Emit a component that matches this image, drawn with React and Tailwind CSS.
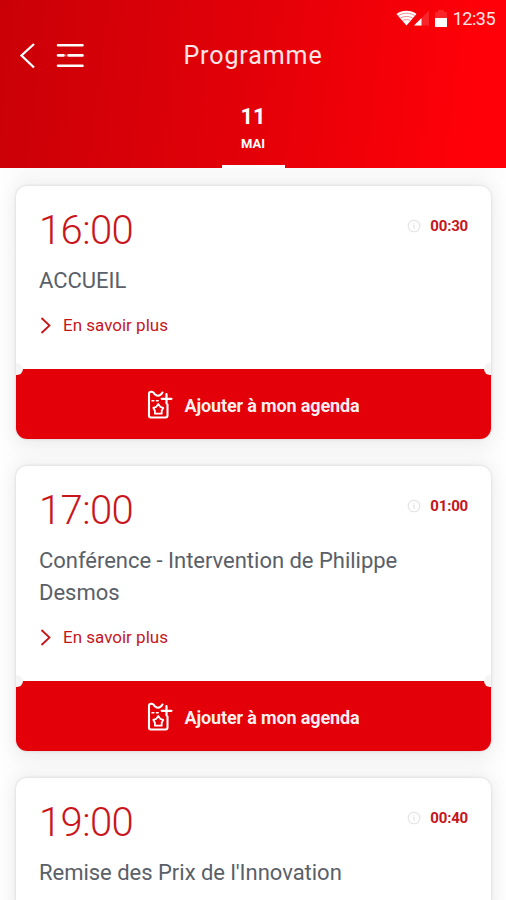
import React from "react";

const sessions = [
  { id: 1, time: "16:00", duration: "00:30", title: "ACCUEIL", expanded: true },
  {
    id: 2,
    time: "17:00",
    duration: "01:00",
    title: "Conférence - Intervention de Philippe Desmos",
    expanded: true,
  },
  {
    id: 3,
    time: "19:00",
    duration: "00:40",
    title: "Remise des Prix de l'Innovation",
    expanded: false,
  },
];

// --- Icons ---
const WifiIcon = () => (
  <svg width="21" height="16" viewBox="0 0 22 16" fill="none">
    <path d="M0.5 3.8C6.5 -0.6 15.5 -0.6 21.5 3.8L11 15.8Z" fill="white" />
    <path
      d="M2.5 5.4C8 2.2 14 2.2 19.5 5.4M4.5 8C9 5.8 13 5.8 17.5 8M7 10.5C9.5 9.4 12.5 9.4 15 10.5"
      stroke="#f50008"
      strokeWidth="0.8"
      opacity="0.6"
    />
  </svg>
);

const SignalIcon = () => (
  <svg width="15" height="16" viewBox="0 0 16 16">
    <path d="M0 16L16 0V16Z" fill="white" opacity="0.14" />
    <path d="M0 16L8 8V16Z" fill="white" />
  </svg>
);

const BatteryIcon = () => (
  <svg width="12" height="17" viewBox="0 0 12 17">
    <path d="M3 0H9V2H12V8H0V2H3Z" fill="white" opacity="0.14" />
    <path d="M0 8H12V17H0Z" fill="white" />
  </svg>
);

const BackIcon = () => (
  <svg width="16" height="26" viewBox="0 0 16 26" fill="none">
    <path d="M15 1L2.5 12.5L15 24.5" stroke="white" strokeWidth="2.3" />
  </svg>
);

const MenuIcon = () => (
  <svg width="28" height="26" viewBox="0 0 28 26" fill="none">
    <path
      d="M2 2.3H26.5M2 12.4H7.5M12.5 12.4H26.5M2 22.8H26.5"
      stroke="white"
      strokeWidth="2.6"
      strokeLinecap="round"
    />
    <path d="M9.3 12.4H10.3" stroke="white" strokeWidth="2.2" opacity="0.6" />
  </svg>
);

const ChevronIcon = () => (
  <svg width="12" height="18" viewBox="0 0 12 18" fill="none">
    <path d="M2.5 2L10.5 9.5L2.5 17" stroke="#c41218" strokeWidth="1.8" />
  </svg>
);

const InfoIcon = () => (
  <svg width="14" height="14" viewBox="0 0 14 14" fill="none">
    <circle cx="7" cy="7" r="5.8" stroke="#e2e2e2" strokeWidth="1.1" />
    <path d="M7 3.8V4.8M7 6V10.2M5.8 6.2H7" stroke="#dedede" />
  </svg>
);

const AgendaIcon = () => (
  <svg
    width="26"
    height="30"
    viewBox="0 0 26 30"
    fill="none"
    stroke="white"
    strokeLinejoin="round"
    strokeLinecap="round"
  >
    <path
      d="M15.5 2.5Q13.5 5.8 11 5.8T6.5 2.5Q5.5 1.8 4 1.8Q2 1.8 2 3.8V25.5Q2 27.5 4 27.5H18.5Q20.5 27.5 20.5 25.5V14.5"
      strokeWidth="2.1"
    />
    <path d="M19.5 4V13.5M14.7 8.8H24.5" strokeWidth="2.2" />
    <path d="M5 10.8H13.5" strokeWidth="1.6" strokeDasharray="1.8 2.6" />
    <path
      d="M11.3 14L13.3 16.8L16.3 17.8L14.7 20.7V23.7H7.9V20.7L6.3 17.8L9.3 16.8Z"
      strokeWidth="1.8"
    />
  </svg>
);

// --- Session card, shaped like a ticket ---
const SessionCard = ({ time, duration, title, expanded }) => {
  return (
    <div className="rounded-[11px] bg-white shadow-[0_0_3px_rgba(0,0,0,0.14),0_2px_20px_rgba(0,0,0,0.08)]">
      <div className="px-[23px] pt-5 pb-[32px]">
        <div className="flex items-start justify-between">
          <div className="text-[40px] leading-[50px] font-light tracking-[-0.6px] text-[#c9161c]">
            {time}
          </div>
          <div className="mt-[10px] flex items-center gap-[9px]">
            <InfoIcon />
            <span className="text-[15px] leading-5 font-bold tracking-[-0.2px] text-[#c5161c]">
              {duration}
            </span>
          </div>
        </div>
        <h2 className="mt-[9px] text-[22px] leading-8 font-normal tracking-[-0.02px] text-[#596068]">
          {title}
        </h2>
        {expanded && (
          <button
            type="button"
            className="mt-4 flex h-6 items-center gap-3 text-[17px] leading-6 text-[#c5161c]"
          >
            <ChevronIcon />
            En savoir plus
          </button>
        )}
      </div>
      {expanded && (
        <div className="relative">
          <button
            type="button"
            className="flex h-[70px] w-full items-center justify-center gap-3 rounded-b-[11px] bg-[#e30008] pt-[2px] pr-px text-[18px] font-bold tracking-[-0.15px] text-white/95"
          >
            <AgendaIcon />
            Ajouter à mon agenda
          </button>
          <span className="absolute -top-[6px] left-0 h-3 w-[7px] rounded-r-full bg-[#f5f5f5]" />
          <span className="absolute -top-[6px] right-0 h-3 w-[7px] rounded-l-full bg-[#f5f5f5]" />
        </div>
      )}
    </div>
  );
};

const App = () => {
  return (
    <div className="flex h-[900px] w-full flex-col overflow-hidden bg-linear-[90deg,#fefefe,#fafafa_5%,#fafafa_95%,#fefefe] font-['Roboto','Liberation_Sans',sans-serif]">
      <header className="flex h-[168px] shrink-0 flex-col bg-linear-[97deg,#ca0007,#e30008_50%,#ff0008_92%] text-white">
        <div className="flex h-9 items-center justify-end pr-[11px] text-white/90">
          <WifiIcon />
          <div className="-ml-[3px] flex gap-[6px]">
            <SignalIcon />
            <BatteryIcon />
          </div>
          <span className="ml-[6px] text-[18px] tracking-[-0.5px]">12:35</span>
        </div>
        <div className="grid h-10 grid-cols-[1fr_auto_1fr] items-center">
          <div className="flex items-center gap-[21px] pl-[19px]">
            <BackIcon />
            <MenuIcon />
          </div>
          <h1 className="text-[25px] tracking-[0.9px] text-white/90">
            Programme
          </h1>
        </div>
        <div className="mx-auto mt-auto flex h-[65px] w-[63px] flex-col items-center border-b-[3px] border-white">
          <span className="text-[22px] leading-7 font-bold">11</span>
          <span className="mt-[5px] text-[13px] leading-4 font-bold">MAI</span>
        </div>
      </header>
      <main className="flex flex-col gap-[27px] pt-[18px] pr-[15px] pl-4">
        {sessions.map((session) => (
          <SessionCard
            key={session.id}
            time={session.time}
            duration={session.duration}
            title={session.title}
            expanded={session.expanded}
          />
        ))}
      </main>
    </div>
  );
};

export default App;
